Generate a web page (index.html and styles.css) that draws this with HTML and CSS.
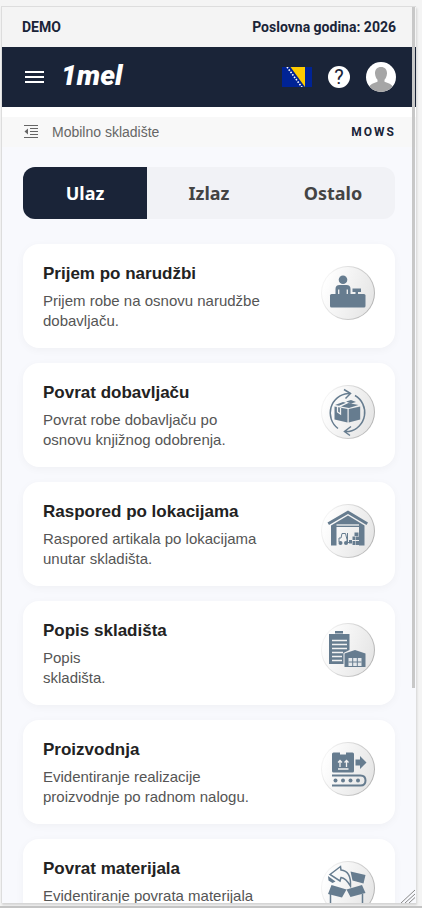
FILE: index.html
```html
<!DOCTYPE html>
<html lang="bs">
<head>
<meta charset="utf-8">
<meta name="viewport" content="width=device-width, initial-scale=1">
<title>Mobilno skladište</title>
<link rel="stylesheet" href="styles.css">
</head>
<body>

<div class="frame">
    <div class="screen">
        <div class="info-bar">
            <span>DEMO</span>
            <span>Poslovna godina: 2026</span>
        </div>

        <header class="navbar">
            <button class="icon-button" aria-label="Meni">
                <svg width="20" height="14" viewBox="0 0 20 14"><path d="M0 2h19M0 7h19M0 12h19" stroke="#fff" stroke-width="2"/></svg>
            </button>
            <a class="logo" href="#">1mel</a>
            <button class="icon-button flag" aria-label="Jezik">
                <svg width="30" height="20" viewBox="0 0 30 20">
                    <path fill="#002395" d="M0 0h30v20H0z"/>
                    <path fill="#fecb00" d="M8.500 0H23v20z"/>
                    <path d="M5 0l15.500 21" stroke="#fff" stroke-width="1.600" stroke-dasharray="1.600 1.400"/>
                </svg>
            </button>
            <button class="icon-button help" aria-label="Pomoć">?</button>
            <button class="icon-button" aria-label="Profil">
                <svg width="30" height="30" viewBox="0 0 30 30">
                    <clipPath id="avatar"><circle cx="15" cy="15" r="15"/></clipPath>
                    <g clip-path="url(#avatar)">
                        <path fill="#fff" d="M0 0h30v30H0z"/>
                        <path fill="#a6a6a6" d="M15 5c3.800 0 6.200 2.700 6 6.500-.2 3-1.300 5-2.500 6.200v2c3.500 1.200 7.500 2.300 8.500 5.800V30H3v-4.500c1-3.500 5-4.600 8.500-5.800v-2C10.300 16.500 9.200 14.500 9 11.500 8.800 7.700 11.200 5 15 5z"/>
                    </g>
                </svg>
            </button>
        </header>

        <div class="breadcrumb">
            <svg width="14" height="14" viewBox="0 0 14 14"><path d="M0 .5h14M6 3.500h8M6 6.500h8M6 9.500h8M0 12.500h14" stroke="#666"/><path fill="#666" d="M4 3.500v6l-3.500-3z"/></svg>
            <span>Mobilno skladište</span>
            <span class="module">MOWS</span>
        </div>

        <main class="content">
            <div class="tabs">
                <button class="tab active">Ulaz</button>
                <button class="tab">Izlaz</button>
                <button class="tab">Ostalo</button>
            </div>

            <a class="card" href="#">
                <div class="card-text">
                    <h2>Prijem po narudžbi</h2>
                    <p>Prijem robe na osnovu narudžbe dobavljaču.</p>
                </div>
                <div class="card-icon">
                    <svg viewBox="0 0 54 54">
                        <circle cx="22" cy="13.700" r="4.300"/>
                        <path d="M14.500 29v-6q0-4 4-4h7q4 0 4 4v6z"/>
                        <rect x="9" y="28" width="35.500" height="13.500" rx="1.500"/>
                        <path d="M31.500 22.500h8.500V26h-3v2h-2.500v-2h-3z"/>
                        <path class="light" d="M17.700 23.500V28M26.300 23.500V28"/>
                    </svg>
                </div>
            </a>

            <a class="card" href="#">
                <div class="card-text">
                    <h2>Povrat dobavljaču</h2>
                    <p>Povrat robe dobavljaču po osnovu knjižnog odobrenja.</p>
                </div>
                <div class="card-icon">
                    <svg viewBox="0 0 54 54">
                        <path class="line" d="M17 43.500A19.500 19.500 0 0 1 27 8.500h2M23 4.500l6.500 4-5 5M34 10.500A19.500 19.500 0 0 1 28 46.500h-4M30 41.500l-6.500 5 5.500 4"/>
                        <path d="M13.500 21.500l13 2.500v13.500l-13-3zM27.700 24l11.500-2.500v13l-11.500 3zM14 20l8-3 3 .8-7 3zM20 21.500l7.500-3.500 10 2-9.500 3zM25 16.500l5-1.500 5 2-5 1.500z"/>
                        <path class="light" d="M16.500 22v5l3 2v-6"/>
                    </svg>
                </div>
            </a>

            <a class="card" href="#">
                <div class="card-text">
                    <h2>Raspored po lokacijama</h2>
                    <p>Raspored artikala po lokacijama unutar skladišta.</p>
                </div>
                <div class="card-icon">
                    <svg viewBox="0 0 54 54">
                        <path d="M27 6.500l20 12-1.500 2.500L27 10 8 21l-1.500-2.500z"/>
                        <path d="M10 21.500l17-10 16.500 10V41.500H38V23H15.500v18.500H10z"/>
                        <path class="light" d="M15.500 21h22.500"/>
                        <path class="line thin" d="M18 38v-4h2l1-4.500h3.500l1.500 6v3.500M26.500 29v10.500M27 38.500h4"/>
                        <circle cx="19.500" cy="39" r="2"/><circle cx="25" cy="39" r="2"/>
                        <path d="M28 36h3v3.500h-3zM31.500 37h3v4h-3zM35 37h3v4h-3zM31.500 32.500h3V36h-3zM35 32.500h3V36h-3zM33.500 28.500h4v3.500h-4z"/>
                    </svg>
                </div>
            </a>

            <a class="card" href="#">
                <div class="card-text">
                    <h2>Popis skladišta</h2>
                    <p>Popis<br>skladišta.</p>
                </div>
                <div class="card-icon">
                    <svg viewBox="0 0 54 54">
                        <path d="M14 8h8v2.500h-8zM8 11h20.500v16l-6 3v11H8z"/>
                        <path class="light" d="M11 17.500h15M11 21.500h15M11 25.500h15M11 29.500h11M11 33.500h10M11 37.500h10"/>
                        <path d="M23.500 30.500L34 27l10.500 3.500v13.500h-21z"/>
                        <path class="glass" d="M27.500 35h13v8h-13z"/>
                        <path class="line thin" d="M31.700 35v8M36.300 35v8M27.500 39h13"/>
                    </svg>
                </div>
            </a>

            <a class="card" href="#">
                <div class="card-text">
                    <h2>Proizvodnja</h2>
                    <p>Evidentiranje realizacije proizvodnje po radnom nalogu.</p>
                </div>
                <div class="card-icon">
                    <svg viewBox="0 0 54 54">
                        <path d="M12.500 10.500H19v2h6v-2h6.500q1.500 0 1.500 1.500v17q0 1.500-1.500 1.500h-19q-1.500 0-1.500-1.500V12q0-1.500 1.500-1.500z"/>
                        <path class="light" d="M17 27h10.500M19 25v-6M17 20.500l2-2 2 2M25.500 25v-6M23.500 20.500l2-2 2 2"/>
                        <path d="M34.500 17.500H39V14l6.500 6.500L39 27v-3.500h-4.500z"/>
                        <path class="line thick" d="M11 33.500h28.500q5 0 5 5t-5 5H11"/>
                        <circle cx="14.500" cy="38.500" r="2"/><circle cx="22" cy="38.500" r="2"/><circle cx="29.500" cy="38.500" r="2"/><circle cx="37" cy="38.500" r="2"/>
                    </svg>
                </div>
            </a>

            <a class="card" href="#">
                <div class="card-text">
                    <h2>Povrat materijala</h2>
                    <p>Evidentiranje povrata materijala</p>
                </div>
                <div class="card-icon">
                    <svg viewBox="0 0 54 54">
                        <path d="M10.500 24l15 4.500-4.500 8-14-3.500zM25.500 28.500l15.500-4.500 3.500 8-15 4zM29.500 10.500l15 3.500-2 8.500-11-3zM7 15l7.500 5.500-3 1.500-4-2.500z"/>
                        <path class="line" d="M9.500 33v13l16 3 16-3V33M9 13.500L19.500 5.500l.5 3.500c6 .5 10 5 9.500 16-3-5-6-8-9.500-8.500L19 20z"/>
                    </svg>
                </div>
            </a>
        </main>
    </div>

    <div class="scroll-thumb"></div>
    <svg class="resize-grip" width="14" height="14" viewBox="0 0 14 14"><path d="M0 14L14 1M4 14l10-9M8 14l6-5.500" stroke="#888"/></svg>
</div>

</body>
</html>
```

FILE: styles.css
```css
* {
    box-sizing: border-box;
}

body {
    display: flex;
    height: 100vh;
    margin: 0;
    padding: 6px 6px 3px 1px;
    background-color: #f4f4f4;
    border-bottom: 2px solid #c4c4c4;
    font-family: "Liberation Sans", Arial, sans-serif;
}

.frame {
    position: relative;
    flex: 1;
    min-width: 0;
    border-top: 1px solid #ddd;
    border-left: 1px solid #ddd;
    box-shadow: 1px 2px 2px #d4d4d4;
}

.screen {
    height: 100%;
    overflow-y: auto;
    scrollbar-width: none;
    background-color: #f8f9fd;
}

.info-bar {
    display: flex;
    justify-content: space-between;
    align-items: center;
    height: 40px;
    padding: 0 20px;
    background-color: #f4f4f4;
    color: #1a2438;
    font: bold 14px Roboto, sans-serif;
}

.navbar {
    display: flex;
    align-items: center;
    height: 60px;
    padding: 0 20px 0 23px;
    background-color: #1a2438;
}

.icon-button {
    display: flex;
    padding: 0;
    background: none;
    border: none;
    cursor: pointer;
}

.logo {
    margin-left: 16px;
    padding-bottom: 3px;
    color: #fff;
    font: italic 900 28px Roboto, sans-serif;
    text-decoration: none;
}

.flag {
    margin-left: auto;
}

.help {
    justify-content: center;
    align-items: center;
    width: 22px;
    height: 22px;
    margin: 0 16px;
    background-color: #fff;
    border-radius: 50%;
    color: #1a2438;
    font: 400 20px Roboto, sans-serif;
}

.breadcrumb {
    display: flex;
    align-items: center;
    gap: 14px;
    height: 40px;
    padding: 0 20px 0 22px;
    background-color: #f8f8f8;
    border-top: 10px solid #fff;
    color: #666;
    font-size: 14px;
}

.module {
    margin-left: auto;
    color: #1a2438;
    font: bold 12px Roboto, sans-serif;
    letter-spacing: 2px;
}

.content {
    display: flex;
    flex-direction: column;
    gap: 15px;
    padding: 20px 21px;
}

.tabs {
    display: flex;
    height: 52px;
    margin-bottom: 10px;
    background-color: #f1f2f6;
    border-radius: 12px;
    overflow: hidden;
}

.tab {
    flex: 1;
    background: none;
    border: none;
    color: #444;
    font: bold 18px "Noto Sans", sans-serif;
    cursor: pointer;
}

.tab.active {
    background-color: #1a2438;
    color: #fff;
}

.card {
    display: flex;
    justify-content: space-between;
    align-items: flex-start;
    padding: 19px 20px 17px;
    background-color: #fff;
    border-radius: 16px;
    box-shadow: 0 2px 8px rgba(0, 0, 0, 0.04);
    color: #555;
    text-decoration: none;
}

.card-text {
    max-width: 220px;
}

.card h2 {
    margin: 0 0 6px;
    color: #222;
    font-size: 17px;
    line-height: 22px;
}

.card p {
    margin: 0;
    font-size: 15px;
    line-height: 20px;
}

.card-icon {
    width: 54px;
    height: 54px;
    margin-top: 3px;
    border: 1px solid transparent;
    border-radius: 50%;
    background: linear-gradient(110deg, #fff 10%, #e2e2e2) padding-box, linear-gradient(110deg, #fff, #aaa) border-box;
}

.card-icon svg {
    display: block;
    width: 54px;
    height: 54px;
    margin: -1px;
    fill: #667c8f;
}

.card-icon .line {
    fill: none;
    stroke: #667c8f;
    stroke-width: 1.500;
}

.card-icon .thin {
    stroke-width: 1;
}

.card-icon .thick {
    stroke-width: 2;
}

.card-icon .light {
    fill: none;
    stroke: #f2f2f2;
    stroke-width: 1.300;
}

.card-icon .glass {
    fill: #e4e8eb;
}

.scroll-thumb {
    position: absolute;
    top: 0;
    right: 1px;
    width: 3px;
    height: 76%;
    background-color: #c8c8c8;
}

.resize-grip {
    position: absolute;
    right: 1px;
    bottom: 0;
}
```
